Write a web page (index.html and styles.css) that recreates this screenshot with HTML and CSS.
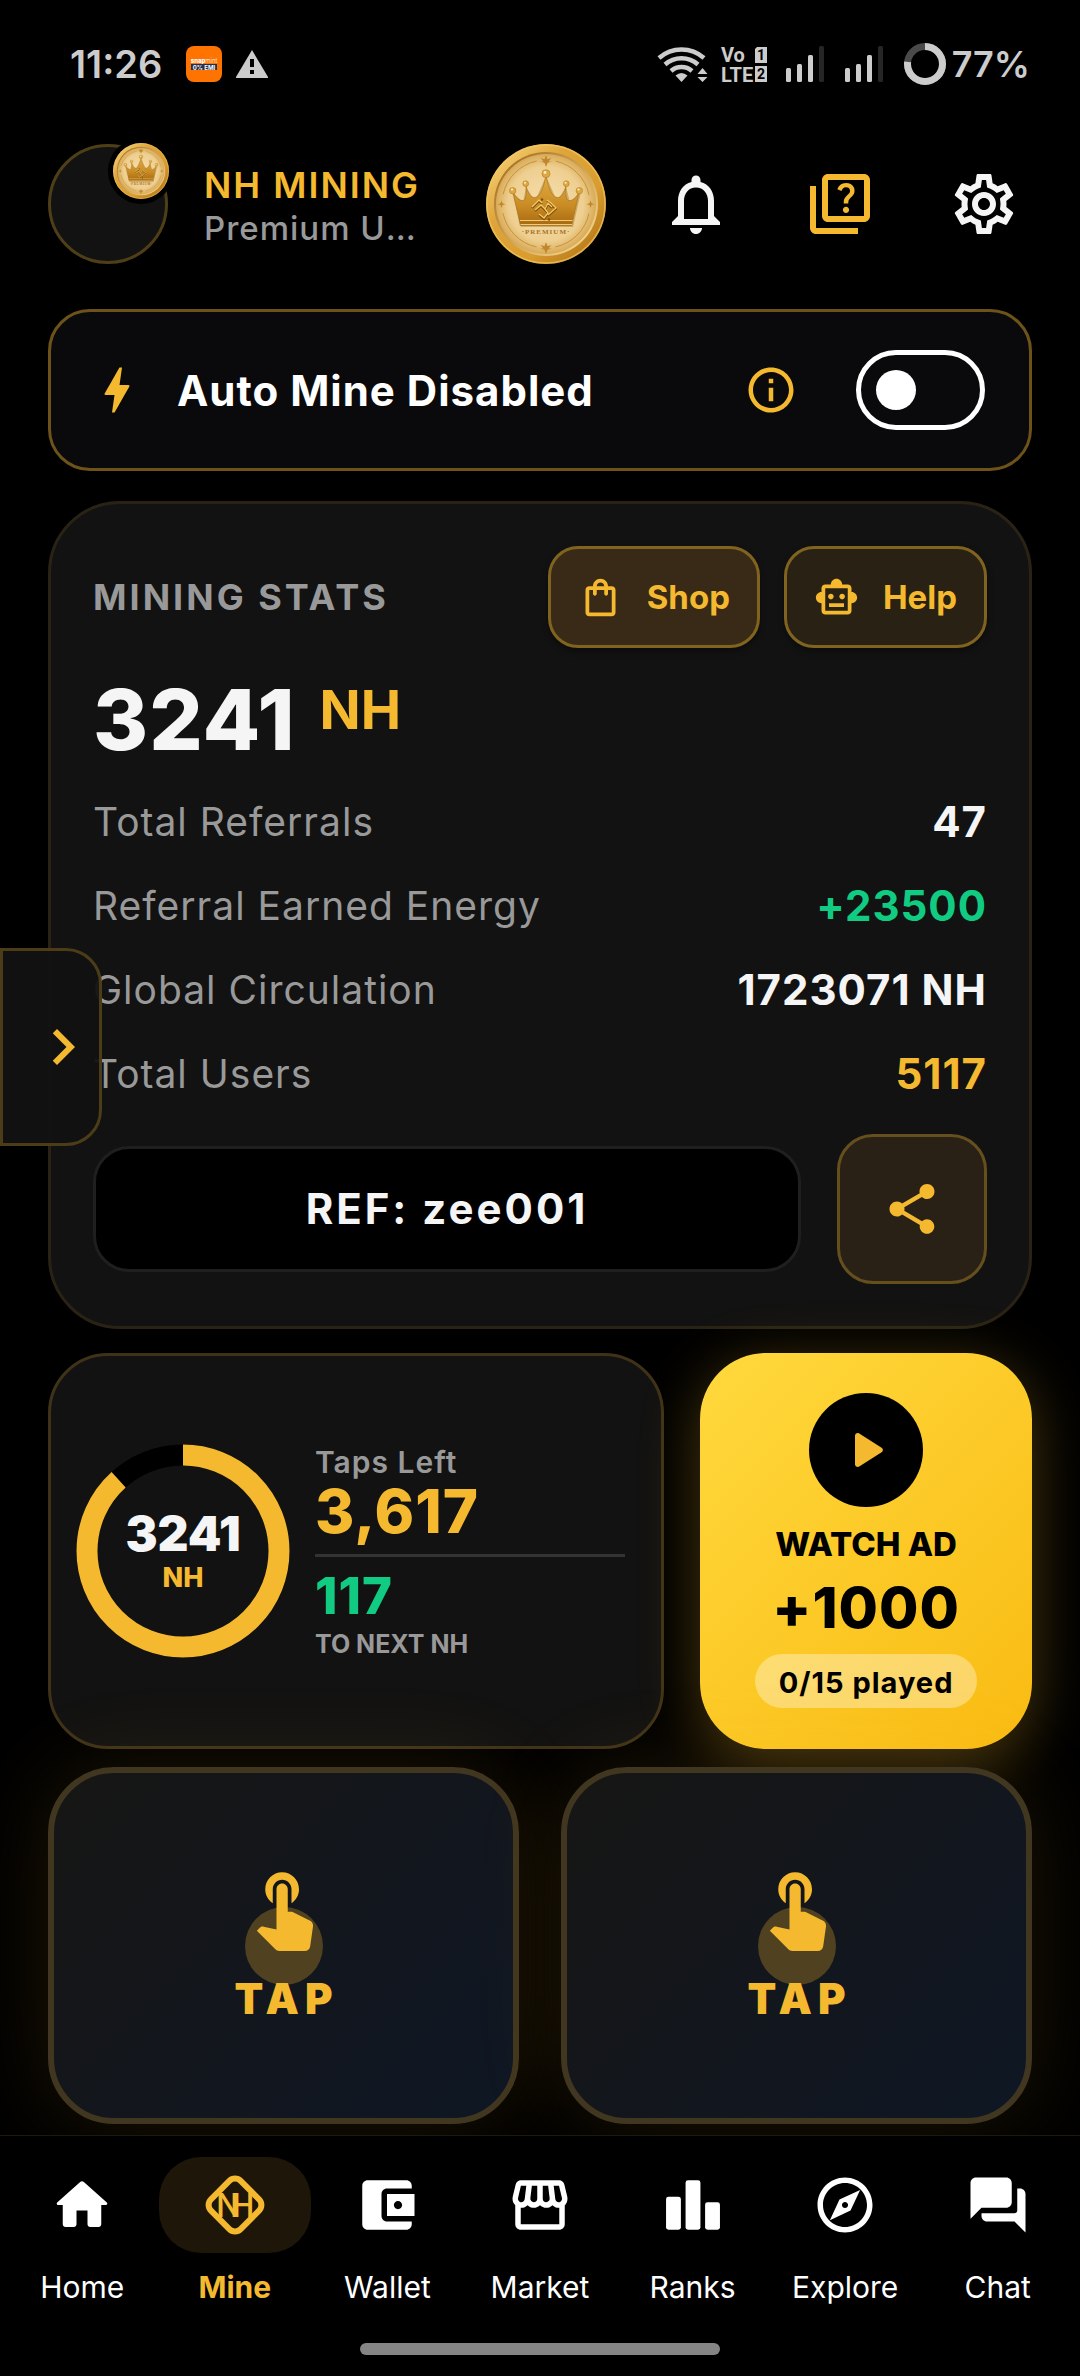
FILE: index.html
```html
<!DOCTYPE html>
<html lang="en">
<head>
    <meta charset="UTF-8">
    <meta name="viewport" content="width=device-width, initial-scale=1.0">
    <title>NH Mining</title>
    <link rel="stylesheet" href="styles.css">
</head>
<body>
    <!-- Shared symbols -->
    <svg class="defs" width="0" height="0" aria-hidden="true">
        <defs>
            <linearGradient id="coinRim" x1="0" y1="0" x2="1" y2="1">
                <stop offset="0" stop-color="#fbdc86"/>
                <stop offset="0.35" stop-color="#dfa53a"/>
                <stop offset="0.65" stop-color="#d99c2e"/>
                <stop offset="1" stop-color="#a86a12"/>
            </linearGradient>
            <linearGradient id="coinEdge" x1="1" y1="1" x2="0" y2="0">
                <stop offset="0" stop-color="#ffe39a"/>
                <stop offset="1" stop-color="#9c6315"/>
            </linearGradient>
            <radialGradient id="coinFace">
                <stop offset="0" stop-color="#f6dfae"/>
                <stop offset="0.75" stop-color="#eecf90"/>
                <stop offset="1" stop-color="#d9ab58"/>
            </radialGradient>
            <linearGradient id="crownFill" x1="0" y1="0" x2="0" y2="1">
                <stop offset="0" stop-color="#e3ac3e"/>
                <stop offset="0.6" stop-color="#c98c25"/>
                <stop offset="1" stop-color="#a8690f"/>
            </linearGradient>
        </defs>
        <symbol id="coin" viewBox="0 0 120 120">
            <circle cx="60" cy="60" r="60" fill="url(#coinRim)"/>
            <circle cx="60" cy="60" r="59" fill="none" stroke="#f2c763" stroke-width="1.5" opacity="0.7"/>
            <circle cx="60" cy="60" r="52" fill="url(#coinEdge)"/>
            <circle cx="60" cy="60" r="50" fill="url(#coinFace)"/>
            <circle cx="60" cy="60" r="44" fill="none" stroke="#c8923a" stroke-width="1" stroke-dasharray="50 19.1" stroke-dashoffset="-9.5"/>
            <g fill="#bf862b">
                <path d="M60 11l1.5 4.2 3.8-1.2-2.8 3.600H66l-4.500 1.200L60 23l-1.500-4.200L54 17.600h3.500l-2.800-3.600 3.800 1.200z"/>
                <path d="M60 98l1.500 4.200 3.800-1.200-2.800 3.600H66l-4.500 1.200L60 110l-1.500-4.200-4.500-1.200h3.500l-2.800-3.600 3.800 1.200z"/>
                <path d="M15.500 56.500l1 2.800 3 .9-3 .9-1 2.800-1-2.800-3-.9 3-.9z"/>
                <path d="M104.500 56.500l1 2.800 3 .9-3 .9-1 2.800-1-2.800-3-.9 3-.9z"/>
            </g>
            <path d="M35 83h52l8-35-11 10-4-15-9 14-11-25-11 25-9-14-3 15-11-10z" fill="#8f5b12" opacity="0.35"/>
            <path d="M34.300 81.500L27 48c3 6 6.500 9 10.500 8.500 3-1 3-9 2.500-15 1.500 7 4.500 12.500 9 12 5-1 8.500-9 11-22 2.500 13 6 21 11 22 4.500.5 7.500-5 9-12-.5 6-.5 14 2.500 15 4 .5 7.500-2.500 10.500-8.500l-7.300 33.500z" fill="url(#crownFill)" stroke="#a8701c" stroke-width="0.600"/>
            <path d="M34 76.500h52.500M34.500 80.500h51.500" stroke="#f7d683" stroke-width="0.900" fill="none"/>
            <g fill="#dfa941" stroke="#a8701c" stroke-width="0.500">
                <circle cx="26.700" cy="46.700" r="3.200"/>
                <circle cx="39.700" cy="39.700" r="2.900"/>
                <circle cx="60" cy="29.700" r="4"/>
                <circle cx="80.300" cy="39.700" r="2.900"/>
                <circle cx="93.300" cy="46.700" r="3.200"/>
            </g>
            <g fill="#fff0bf">
                <circle cx="26" cy="45.500" r="1.100"/>
                <circle cx="39" cy="38.700" r="1"/>
                <circle cx="59" cy="28.500" r="1.400"/>
                <circle cx="79.500" cy="38.700" r="1"/>
                <circle cx="92.500" cy="45.500" r="1.100"/>
            </g>
            <path d="M46 64l7-7 3 3M49 67l6-5 4 4 3-6 4 4M53 71l5 4 4-5-3-4M62 72l8-7-5-5-4-3M55 56l2-1M62 75l2 1" fill="none" stroke="#7d4d0d" stroke-width="2"/>
            <path d="M46 63l7-7 3 3M49 66l6-5 4 4 3-6 4 4M53 70l5 4 4-5-3-4M62 71l8-7-5-5-4-3" fill="none" stroke="#f3c964" stroke-width="1.300"/>
            <text x="60" y="90" class="coin-text">·PREMIUM·</text>
        </symbol>
        <symbol id="tapHand" viewBox="0 0 24 24">
            <path d="M9 11.240V7.500C9 6.120 10.120 5 11.500 5S14 6.120 14 7.500v3.740c1.210-.81 2-2.180 2-3.740C16 5.010 13.990 3 11.500 3S7 5.010 7 7.500c0 1.560.79 2.930 2 3.740zm9.840 4.630l-4.540-2.260c-.17-.07-.35-.11-.54-.11H13v-6c0-.83-.67-1.500-1.500-1.500S10 6.670 10 7.500v10.740l-3.430-.72c-.08-.01-.15-.03-.24-.03-.31 0-.59.13-.79.33l-.79.8 4.940 4.940c.27.27.65.44 1.060.44h6.790c.75 0 1.330-.55 1.440-1.280l.75-5.270c.01-.07.02-.14.02-.2 0-.62-.38-1.160-.91-1.380z"/>
        </symbol>
        <symbol id="signal" viewBox="0 0 38 36">
            <rect x="0" y="22" width="5" height="14" rx="1.500"/>
            <rect x="11" y="18" width="5" height="18" rx="1.500"/>
            <rect x="22" y="9" width="5" height="27" rx="1.500"/>
            <rect x="33" y="0" width="5" height="36" rx="1.500" fill="#262626"/>
        </symbol>
    </svg>

    <!-- Phone status bar -->
    <div class="status-bar">
        <div class="status-left">
            <span class="clock">11:26</span>
            <svg class="app-badge" viewBox="0 0 36 36">
                <rect width="36" height="36" rx="8" fill="#ff7300"/>
                <text x="18" y="17" class="app-name">snap<tspan class="thin">mint</tspan></text>
                <rect x="5" y="18" width="26" height="6" fill="#26304a"/>
                <text x="18" y="23.500" class="app-offer">0% EMI</text>
            </svg>
            <svg class="alert" viewBox="0 0 32 28">
                <path d="M16 0L32 27v1H0v-1zM14 9v8h4V9zM14 20v4h4v-4z" fill-rule="evenodd"/>
            </svg>
        </div>
        <div class="status-right">
            <svg class="wifi" viewBox="0 0 51 36">
                <g fill="none" stroke="#ccc" stroke-width="4.500">
                    <path d="M2 12a34 34 0 0 1 45 0"/>
                    <path d="M8 18.500a25 25 0 0 1 33 0"/>
                    <path d="M14 25a16 16 0 0 1 21 0"/>
                </g>
                <path d="M24.500 36l-6-6.500q6-5 12 0z"/>
                <path d="M45.500 22l5 6h-10zM45.500 36l5-5h-10z"/>
            </svg>
            <svg class="volte" viewBox="0 0 46 36">
                <text x="0" y="15.500">Vo</text>
                <text x="0" y="35.500">LTE</text>
                <path d="M36 1h10v16H34V3z"/>
                <path d="M34 20h12v16H34z"/>
                <text x="40" y="14" class="sim">1</text>
                <text x="40" y="33" class="sim">2</text>
            </svg>
            <svg class="bars"><use href="#signal"/></svg>
            <svg class="bars"><use href="#signal"/></svg>
            <div class="battery">
                <svg viewBox="0 0 42 42">
                    <circle cx="21" cy="21" r="17.500" fill="none" stroke="#4a4a4a" stroke-width="7"/>
                    <circle cx="21" cy="21" r="17.500" fill="none" stroke="#ccc" stroke-width="7" pathLength="100" stroke-dasharray="77 100" transform="rotate(-90 21 21)"/>
                </svg>
                <span>77%</span>
            </div>
        </div>
    </div>

    <header class="header">
        <div class="avatar">
            <svg class="avatar-badge"><use href="#coin"/></svg>
        </div>
        <div class="user">
            <div class="user-name">NH MINING</div>
            <div class="user-plan">Premium User</div>
        </div>
        <svg class="coin"><use href="#coin"/></svg>
        <div class="header-actions">
            <button type="button" class="icon-btn" aria-label="Notifications">
                <svg viewBox="0 0 24 24"><path d="M12 22c1.100 0 2-.9 2-2h-4c0 1.100.9 2 2 2zm6-6v-5c0-3.070-1.630-5.640-4.500-6.320V4c0-.83-.67-1.500-1.500-1.500s-1.500.67-1.500 1.500v.68C7.640 5.360 6 7.920 6 11v5l-2 2v1h16v-1l-2-2zm-2 1H8v-6c0-2.480 1.510-4.500 4-4.500s4 2.020 4 4.500v6z"/></svg>
            </button>
            <button type="button" class="icon-btn gold" aria-label="Quiz">
                <svg viewBox="0 0 24 24"><path d="M4 6H2v14c0 1.100.9 2 2 2h14v-2H4V6z"/><path d="M20 2H8c-1.100 0-2 .9-2 2v12c0 1.100.9 2 2 2h12c1.100 0 2-.9 2-2V4c0-1.100-.9-2-2-2zm0 14H8V4h12v12z"/><path d="M13.510 10.160c.41-.73 1.180-1.160 1.630-1.800.48-.68.21-1.940-1.140-1.940-.88 0-1.320.67-1.500 1.230l-1.370-.57C11.510 5.960 12.520 5 13.990 5c1.230 0 2.080.56 2.510 1.260.37.6.58 1.730.01 2.570-.63.93-1.230 1.210-1.560 1.810-.13.24-.18.4-.18 1.180h-1.520c.01-.41-.06-1.080.26-1.660zM12.950 13.950c0-.59.47-1.040 1.050-1.040.59 0 1.040.45 1.040 1.040 0 .58-.44 1.050-1.040 1.050-.58 0-1.050-.47-1.050-1.050z"/></svg>
            </button>
            <button type="button" class="icon-btn" aria-label="Settings">
                <svg viewBox="0 0 24 24"><path d="M19.430 12.980c.04-.32.07-.64.07-.98 0-.34-.03-.66-.07-.98l2.110-1.650c.19-.15.24-.42.12-.64l-2-3.460c-.09-.16-.26-.25-.44-.25-.06 0-.12.01-.17.03l-2.490 1c-.52-.4-1.080-.73-1.690-.98l-.38-2.650C14.460 2.180 14.250 2 14 2h-4c-.25 0-.46.18-.49.42l-.38 2.650c-.61.25-1.170.59-1.690.98l-2.490-1c-.06-.02-.12-.03-.18-.03-.17 0-.34.09-.43.25l-2 3.460c-.13.22-.07.49.12.64l2.110 1.650c-.04.32-.07.65-.07.98 0 .33.03.66.07.98l-2.110 1.650c-.19.15-.24.42-.12.64l2 3.460c.09.16.26.25.44.25.06 0 .12-.01.17-.03l2.490-1c.52.4 1.080.73 1.690.98l.38 2.650c.03.24.24.42.49.42h4c.25 0 .46-.18.49-.42l.38-2.650c.61-.25 1.170-.59 1.690-.98l2.490 1c.06.02.12.03.18.03.17 0 .34-.09.43-.25l2-3.460c.12-.22.07-.49-.12-.64l-2.110-1.650zm-1.980-1.710c.04.31.05.52.05.73 0 .21-.02.43-.05.73l-.14 1.130.89.7 1.080.84-.7 1.210-1.270-.51-1.040-.42-.9.68c-.43.32-.84.56-1.250.73l-1.060.43-.16 1.130-.2 1.350h-1.400l-.19-1.350-.16-1.130-1.060-.43c-.43-.18-.83-.41-1.230-.71l-.91-.7-1.060.43-1.270.51-.7-1.210 1.080-.84.89-.7-.14-1.130c-.03-.31-.05-.54-.05-.74s.02-.43.05-.73l.14-1.130-.89-.7-1.080-.84.7-1.210 1.270.51 1.040.42.9-.68c.43-.32.84-.56 1.250-.73l1.060-.43.16-1.130.2-1.350h1.390l.19 1.350.16 1.130 1.060.43c.43.18.83.41 1.230.71l.91.7 1.060-.43 1.270-.51.7 1.210-1.070.85-.89.7.14 1.130zM12 8c-2.210 0-4 1.790-4 4s1.790 4 4 4 4-1.790 4-4-1.790-4-4-4zm0 6c-1.100 0-2-.9-2-2s.9-2 2-2 2 .9 2 2-.9 2-2 2z"/></svg>
            </button>
        </div>
    </header>

    <main class="content">
        <!-- Auto mine switch -->
        <section class="auto-mine">
            <svg class="bolt" viewBox="0 0 24 24"><path d="M11 21h-1l1-7H7.500c-.58 0-.57-.32-.38-.66.19-.34.05-.08.07-.12C8.480 10.940 10.420 7.540 13 3h1l-1 7h3.500c.49 0 .56.33.47.51l-.07.15C12.960 17.550 11 21 11 21z"/></svg>
            <label for="autoMine" class="auto-label">Auto Mine Disabled</label>
            <button type="button" class="info-btn" aria-label="About auto mine">
                <svg viewBox="0 0 24 24"><path d="M11 7h2v2h-2zm0 4h2v6h-2zm1-9C6.480 2 2 6.480 2 12s4.480 10 10 10 10-4.480 10-10S17.520 2 12 2zm0 18c-4.410 0-8-3.590-8-8s3.590-8 8-8 8 3.590 8 8-3.590 8-8 8z"/></svg>
            </button>
            <input type="checkbox" id="autoMine" class="switch">
        </section>

        <!-- Mining stats -->
        <section class="stats">
            <div class="stats-head">
                <h2 class="stats-title">MINING STATS</h2>
                <div class="stats-actions">
                    <button type="button" class="chip-btn shop">
                        <svg viewBox="0 0 24 24"><path d="M18 6h-2c0-2.210-1.790-4-4-4S8 3.790 8 6H6c-1.100 0-2 .9-2 2v12c0 1.100.9 2 2 2h12c1.100 0 2-.9 2-2V8c0-1.100-.9-2-2-2zm-6-2c1.100 0 2 .9 2 2h-4c0-1.100.9-2 2-2zm6 16H6V8h2v2c0 .55.45 1 1 1s1-.45 1-1V8h4v2c0 .55.45 1 1 1s1-.45 1-1V8h2v12z"/></svg>
                        Shop
                    </button>
                    <button type="button" class="chip-btn">
                        <svg viewBox="0 0 24 24"><path d="M20 9V7c0-1.100-.9-2-2-2h-3c0-1.660-1.340-3-3-3S9 3.340 9 5H6c-1.100 0-2 .9-2 2v2c-1.660 0-3 1.340-3 3s1.340 3 3 3v4c0 1.100.9 2 2 2h12c1.100 0 2-.9 2-2v-4c1.660 0 3-1.340 3-3s-1.340-3-3-3zm-2 10H6V7h12v12zm-9-6c-.83 0-1.500-.67-1.500-1.500S8.170 10 9 10s1.500.67 1.500 1.500S9.830 13 9 13zm7.500-1.500c0 .83-.67 1.500-1.500 1.500s-1.500-.67-1.500-1.500.67-1.500 1.500-1.500 1.500.67 1.500 1.500zM8 15h8v2H8v-2z"/></svg>
                        Help
                    </button>
                </div>
            </div>
            <div class="balance">
                <span class="balance-value">3241</span>
                <span class="balance-unit">NH</span>
            </div>
            <dl class="stat-list">
                <div class="stat-row"><dt>Total Referrals</dt><dd>47</dd></div>
                <div class="stat-row"><dt>Referral Earned Energy</dt><dd class="green">+23500</dd></div>
                <div class="stat-row"><dt>Global Circulation</dt><dd>1723071 NH</dd></div>
                <div class="stat-row"><dt>Total Users</dt><dd class="gold">5117</dd></div>
            </dl>
            <div class="ref-row">
                <div class="ref-code">REF: zee001</div>
                <button type="button" class="share-btn" aria-label="Share">
                    <svg viewBox="0 0 24 24"><path d="M18 16.080c-.76 0-1.440.3-1.960.77L8.910 12.700c.05-.23.09-.46.09-.7s-.04-.47-.09-.7l7.050-4.110c.54.5 1.250.81 2.040.81 1.660 0 3-1.340 3-3s-1.340-3-3-3-3 1.340-3 3c0 .24.04.47.09.7L8.040 9.810C7.500 9.310 6.790 9 6 9c-1.660 0-3 1.340-3 3s1.340 3 3 3c.79 0 1.500-.31 2.040-.81l7.120 4.160c-.05.21-.08.43-.08.65 0 1.610 1.310 2.920 2.920 2.920s2.920-1.310 2.920-2.920-1.310-2.920-2.920-2.920z"/></svg>
                </button>
            </div>
        </section>

        <!-- Progress and ad reward -->
        <div class="cards">
            <section class="progress">
                <div class="ring">
                    <svg viewBox="0 0 214 214">
                        <circle cx="107" cy="107" r="96" fill="none" stroke="#000" stroke-width="21"/>
                        <circle cx="107" cy="107" r="96" fill="none" stroke="#f4b92f" stroke-width="21" pathLength="1000" stroke-dasharray="883 1000" transform="rotate(-90 107 107)"/>
                    </svg>
                    <div class="ring-text">
                        <span class="ring-value">3241</span>
                        <span class="ring-unit">NH</span>
                    </div>
                </div>
                <div class="taps">
                    <div class="taps-label">Taps Left</div>
                    <div class="taps-value">3,617</div>
                    <div class="next-value">117</div>
                    <div class="next-label">TO NEXT NH</div>
                </div>
            </section>
            <button type="button" class="watch-ad">
                <span class="play">
                    <svg viewBox="0 0 24 24"><path d="M8 6.820v10.360c0 .79.870 1.270 1.540.84l8.140-5.180c.62-.39.62-1.290 0-1.690L9.540 5.980C8.870 5.550 8 6.030 8 6.820z"/></svg>
                </span>
                <span class="watch-title">WATCH AD</span>
                <span class="watch-reward">+1000</span>
                <span class="watch-count">0/15 played</span>
            </button>
        </div>

        <!-- Tap pads -->
        <div class="pads">
            <button type="button" class="pad">
                <svg><use href="#tapHand"/></svg>
                <span>TAP</span>
            </button>
            <button type="button" class="pad">
                <svg><use href="#tapHand"/></svg>
                <span>TAP</span>
            </button>
        </div>
    </main>

    <button type="button" class="side-tab" aria-label="Open side panel">
        <svg viewBox="0 0 24 24"><path d="M10 6L8.590 7.410 13.170 12l-4.580 4.590L10 18l6-6z"/></svg>
    </button>

    <nav class="bottom-nav">
        <div class="nav-items">
            <a href="#home" class="nav-item">
                <span class="nav-icon"><svg viewBox="0 0 24 24"><path d="M10 19v-5h4v5c0 .55.45 1 1 1h3c.55 0 1-.45 1-1v-7h1.700c.46 0 .68-.57.33-.87L12.670 3.600c-.38-.34-.96-.34-1.340 0l-8.360 7.530c-.34.3-.13.87.33.87H5v7c0 .55.45 1 1 1h3c.55 0 1-.45 1-1z"/></svg></span>
                <span>Home</span>
            </a>
            <a href="#mine" class="nav-item active">
                <span class="nav-icon">
                    <svg viewBox="0 0 66 66">
                        <rect x="12" y="12" width="42" height="42" rx="8" fill="none" stroke="#f4b92f" stroke-width="6" transform="rotate(45 33 33)"/>
                        <text x="14 28" y="45" class="nh-mark">NH</text>
                    </svg>
                </span>
                <span>Mine</span>
            </a>
            <a href="#wallet" class="nav-item">
                <span class="nav-icon"><svg viewBox="0 0 24 24"><path d="M21 18v1c0 1.100-.9 2-2 2H5c-1.110 0-2-.9-2-2V5c0-1.100.89-2 2-2h14c1.100 0 2 .9 2 2v1h-9c-1.110 0-2 .9-2 2v8c0 1.100.89 2 2 2h9zm-9-2h10V8H12v8zm4-2.500c-.83 0-1.500-.67-1.500-1.500s.67-1.500 1.500-1.500 1.500.67 1.500 1.500-.67 1.500-1.500 1.500z"/></svg></span>
                <span>Wallet</span>
            </a>
            <a href="#market" class="nav-item">
                <span class="nav-icon"><svg viewBox="0 0 24 24"><path d="M21.900 8.890l-1.050-4.370c-.22-.9-1-1.520-1.910-1.520H5.050c-.9 0-1.690.63-1.900 1.520L2.100 8.890c-.24 1.020-.02 2.060.62 2.880.08.11.19.19.28.29V19c0 1.100.9 2 2 2h14c1.100 0 2-.9 2-2v-6.940c.09-.09.2-.18.28-.28.64-.82.87-1.870.62-2.890zm-2.990-3.900l1.050 4.370c.1.42.01.84-.25 1.170-.14.18-.44.47-.94.47-.61 0-1.140-.49-1.210-1.140L16.980 5l1.930-.01zM13 5h1.960l.54 4.520c.05.39-.07.78-.33 1.070-.22.26-.54.41-.95.41-.67 0-1.220-.59-1.220-1.310V5zM8.490 9.520L9.040 5H11v4.690c0 .72-.55 1.310-1.290 1.310-.34 0-.65-.15-.89-.41-.25-.29-.37-.68-.33-1.070zm-4.450-.16L5.050 5h1.970l-.58 4.860c-.08.65-.6 1.140-1.210 1.140-.49 0-.8-.29-.93-.47-.27-.32-.36-.75-.26-1.170zM5 19v-6.030c.08.01.15.03.23.03.87 0 1.660-.36 2.240-.95.6.6 1.400.95 2.310.95.87 0 1.650-.36 2.230-.93.59.57 1.390.93 2.290.93.84 0 1.640-.35 2.240-.95.58.59 1.370.95 2.240.95.08 0 .15-.02.23-.03V19H5z"/></svg></span>
                <span>Market</span>
            </a>
            <a href="#ranks" class="nav-item">
                <span class="nav-icon"><svg viewBox="0 0 24 24"><rect x="2.200" y="9" width="5.400" height="12" rx="0.900"/><rect x="9.300" y="3" width="5.400" height="18" rx="0.900"/><rect x="16.400" y="11" width="5.400" height="10" rx="0.900"/></svg></span>
                <span>Ranks</span>
            </a>
            <a href="#explore" class="nav-item">
                <span class="nav-icon"><svg viewBox="0 0 24 24"><path d="M12 2C6.480 2 2 6.480 2 12s4.480 10 10 10 10-4.480 10-10S17.520 2 12 2zm0 18c-4.410 0-8-3.590-8-8s3.590-8 8-8 8 3.590 8 8-3.590 8-8 8z"/><path d="M6.500 17.500l7.510-3.490L17.500 6.500 9.990 9.990 6.500 17.500zm5.500-6.600c.61 0 1.100.49 1.100 1.100s-.49 1.100-1.100 1.100-1.100-.49-1.100-1.100.49-1.100 1.100-1.100z" fill-rule="evenodd"/></svg></span>
                <span>Explore</span>
            </a>
            <a href="#chat" class="nav-item">
                <span class="nav-icon"><svg viewBox="0 0 24 24"><path d="M20 6h-1v8c0 .55-.45 1-1 1H6v1c0 1.100.9 2 2 2h10l4 4V8c0-1.100-.9-2-2-2zm-3 5V4c0-1.100-.9-2-2-2H4c-1.100 0-2 .9-2 2v13l4-4h9c1.100 0 2-.9 2-2z"/></svg></span>
                <span>Chat</span>
            </a>
        </div>
        <div class="home-bar"></div>
    </nav>
</body>
</html>
```

FILE: styles.css
```css
* {
    box-sizing: border-box;
}
body {
    margin: 0;
    min-height: 100vh;
    display: flex;
    flex-direction: column;
    position: relative;
    background: #000;
    color: #f5f5f5;
    font-family: Inter, Roboto, sans-serif;
}
svg {
    display: block;
    overflow: visible;
    fill: currentColor;
}
button {
    margin: 0;
    padding: 0;
    border: 0;
    background: none;
    color: inherit;
    font-family: inherit;
    cursor: pointer;
}
.defs {
    position: absolute;
}
.gold {
    color: #f4b92f;
}
.green {
    color: #10cb81;
}

/* Status bar */
.status-bar {
    height: 128px;
    padding: 0 50px 0 70px;
    display: flex;
    justify-content: space-between;
    align-items: center;
    color: #ccc;
}
.status-left,
.status-right,
.battery {
    display: flex;
    align-items: center;
}
.clock {
    font-size: 38px;
    font-weight: 600;
    margin-right: 24px;
}
.app-badge {
    width: 36px;
    height: 36px;
    margin-right: 14px;
}
.app-name {
    font-size: 6px;
    font-weight: 800;
    fill: #fff;
    text-anchor: middle;
}
.app-name .thin {
    font-weight: 300;
}
.app-offer {
    font-size: 6px;
    font-weight: 700;
    fill: #fff;
    text-anchor: middle;
}
.alert {
    width: 32px;
    height: 28px;
}
.wifi {
    width: 51px;
    height: 36px;
    margin-right: 13px;
}
.volte {
    width: 46px;
    height: 36px;
    margin-right: 19px;
    font-family: Roboto, sans-serif;
    font-size: 20px;
    font-weight: 700;
}
.volte .sim {
    font-size: 14px;
    fill: #000;
    text-anchor: middle;
}
.bars {
    width: 38px;
    height: 36px;
    margin-right: 21px;
}
.battery {
    gap: 6px;
    font-size: 36px;
    font-weight: 600;
}
.battery svg {
    width: 42px;
    height: 42px;
}

/* Header */
.header {
    padding: 16px 24px 45px 48px;
    display: flex;
    align-items: center;
}
.avatar {
    position: relative;
    flex: none;
    width: 120px;
    height: 120px;
    border: 3px solid #4f3f18;
    border-radius: 50%;
    background: #121212;
}
.avatar-badge {
    position: absolute;
    top: -9px;
    right: -9px;
    width: 66px;
    height: 66px;
    border: 5px solid #000;
    border-radius: 50%;
    background: #000;
}
.coin-text {
    font-family: "Liberation Serif", serif;
    font-size: 7px;
    font-weight: 700;
    letter-spacing: 1px;
    fill: #a8732a;
    text-anchor: middle;
}
.user {
    flex: 1;
    min-width: 0;
    margin-left: 36px;
    padding-top: 6px;
    line-height: 43px;
    white-space: nowrap;
}
.user-name {
    font-size: 36px;
    font-weight: 600;
    letter-spacing: 2px;
    color: #f4b92f;
}
.user-plan {
    overflow: hidden;
    text-overflow: ellipsis;
    font-size: 33px;
    font-weight: 500;
    letter-spacing: 1px;
    color: #999;
}
.coin {
    flex: none;
    width: 120px;
    height: 120px;
    margin: 0 18px 0 66px;
}
.header-actions {
    display: flex;
}
.icon-btn {
    width: 144px;
    height: 96px;
    display: grid;
    place-items: center;
}
.icon-btn svg {
    width: 72px;
    height: 72px;
}

/* Main column */
.content {
    padding: 0 48px 11px;
}
.auto-mine {
    min-height: 162px;
    padding: 0 44px 0 36px;
    display: flex;
    align-items: center;
    border: 3px solid #6d5319;
    border-radius: 42px;
    background: #0a0a0c;
}
.bolt {
    width: 60px;
    height: 60px;
    color: #f4b92f;
}
.auto-label {
    flex: 1;
    margin-left: 30px;
    font-size: 42px;
    font-weight: 700;
    letter-spacing: 1px;
    color: #fff;
}
.info-btn {
    margin-right: 58px;
    color: #f4b92f;
}
.info-btn svg {
    width: 54px;
    height: 54px;
}
.switch {
    appearance: none;
    margin: 0;
    width: 129px;
    height: 80px;
    padding: 15px;
    display: flex;
    border: 5px solid #fff;
    border-radius: 40px;
    cursor: pointer;
}
.switch::before {
    content: "";
    width: 40px;
    height: 40px;
    border-radius: 50%;
    background: #fff;
}
.switch:checked {
    justify-content: flex-end;
}

/* Stats card */
.stats {
    margin-top: 30px;
    padding: 42px;
    border: 3px solid #2a2315;
    border-radius: 72px;
    background: #121212;
}
.stats-head {
    display: flex;
    justify-content: space-between;
    align-items: center;
}
.stats-title {
    margin: 0;
    font-size: 36px;
    font-weight: 700;
    letter-spacing: 3px;
    color: #999;
}
.stats-actions {
    display: flex;
    gap: 24px;
}
.chip-btn {
    height: 102px;
    padding: 0 27px;
    display: flex;
    align-items: center;
    gap: 24px;
    border: 3px solid #80631f;
    border-radius: 30px;
    background: #292113;
    box-shadow: 0 3px 6px rgba(0, 0, 0, 0.4);
    color: #f4b92f;
    font-size: 33px;
    font-weight: 700;
}
.chip-btn.shop {
    background: #382a16;
}
.chip-btn svg {
    width: 45px;
    height: 45px;
}
.balance {
    margin-top: 21px;
    display: flex;
    gap: 24px;
    line-height: 102px;
}
.balance-value {
    font-size: 84px;
    font-weight: 800;
    letter-spacing: 1px;
}
.balance-unit {
    font-size: 54px;
    font-weight: 700;
    line-height: 82px;
    color: #f4b92f;
}
.stat-list {
    margin: 27px 0 36px;
    display: flex;
    flex-direction: column;
    gap: 36px;
}
.stat-row {
    display: flex;
    justify-content: space-between;
    line-height: 48px;
}
.stat-row dt {
    font-size: 39px;
    letter-spacing: 1px;
    color: #999;
}
.stat-row dd {
    margin: 0;
    font-size: 42px;
    font-weight: 700;
    letter-spacing: 1px;
}
.ref-row {
    display: flex;
    align-items: center;
    gap: 36px;
}
.ref-code {
    flex: 1;
    padding: 35px 0;
    border: 3px solid #1f1f1f;
    border-radius: 36px;
    background: #000;
    font-size: 42px;
    font-weight: 700;
    line-height: 50px;
    letter-spacing: 3px;
    text-align: center;
}
.share-btn {
    width: 150px;
    height: 150px;
    display: grid;
    place-items: center;
    border: 3px solid #65501d;
    border-radius: 36px;
    background: #292115;
    color: #f4b92f;
}
.share-btn svg {
    width: 60px;
    height: 60px;
}

/* Progress and ad cards */
.cards {
    margin-top: 24px;
    display: grid;
    grid-template-columns: 13fr 7fr;
    gap: 36px;
}
.progress {
    padding: 0 36px 0 25px;
    display: flex;
    align-items: center;
    gap: 25px;
    border: 3px solid #3f3218;
    border-radius: 60px;
    background: #121212;
}
.ring {
    flex: none;
    width: 214px;
    display: grid;
    place-items: center;
}
.ring svg,
.ring-text {
    grid-area: 1 / 1;
}
.ring svg {
    width: 100%;
}
.ring-text {
    padding-top: 3px;
    display: flex;
    flex-direction: column;
    align-items: center;
}
.ring-value {
    font-size: 48px;
    font-weight: 900;
    line-height: 50px;
}
.ring-unit {
    font-size: 27px;
    font-weight: 800;
    line-height: 38px;
    color: #f4b92f;
}
.taps {
    flex: 1;
    padding-top: 4px;
}
.taps-label {
    font-size: 30px;
    font-weight: 600;
    line-height: 36px;
    letter-spacing: 1px;
    color: #999;
}
.taps-value {
    padding-bottom: 12px;
    border-bottom: 3px solid #333;
    font-size: 60px;
    font-weight: 800;
    line-height: 62px;
    letter-spacing: 1px;
    color: #f4b92f;
}
.next-value {
    margin-top: 9px;
    font-size: 51px;
    font-weight: 800;
    line-height: 60px;
    letter-spacing: 1px;
    color: #10cb81;
}
.next-label {
    font-size: 25px;
    font-weight: 700;
    line-height: 36px;
    color: #999;
}
.watch-ad {
    padding: 40px 0 41px;
    display: flex;
    flex-direction: column;
    align-items: center;
    border-radius: 66px;
    background: linear-gradient(135deg, #ffd93d, #f9bb12);
    box-shadow: 0 12px 60px rgba(244, 185, 47, 0.3);
    color: #000;
}
.play {
    width: 114px;
    height: 114px;
    display: grid;
    place-items: center;
    border-radius: 50%;
    background: #000;
    color: #f4b92f;
}
.play svg {
    width: 66px;
    height: 66px;
}
.watch-title {
    margin-top: 17px;
    font-size: 33px;
    font-weight: 800;
    line-height: 40px;
}
.watch-reward {
    margin: 11px 0 13px;
    font-size: 57px;
    font-weight: 800;
    line-height: 66px;
    letter-spacing: 1px;
}
.watch-count {
    padding: 4px 24px 0;
    border-radius: 27px;
    background: rgba(255, 255, 255, 0.35);
    font-size: 29px;
    font-weight: 700;
    line-height: 50px;
    letter-spacing: 1px;
}

/* Tap pads */
.pads {
    margin-top: 18px;
    display: grid;
    grid-template-columns: 1fr 1fr;
    gap: 42px;
}
.pad {
    position: relative;
    min-height: 357px;
    padding-bottom: 10px;
    display: flex;
    flex-direction: column;
    align-items: center;
    justify-content: center;
    gap: 27px;
    border: 6px solid #41361f;
    border-radius: 66px;
    background: linear-gradient(135deg, #161614, #12161e 60%, #0e1724);
    box-shadow: 0 0 90px rgba(244, 185, 47, 0.12);
    color: #f4b92f;
}
.pad::before {
    content: "";
    position: absolute;
    top: 50%;
    left: 50%;
    width: 78px;
    height: 78px;
    margin: -39px 0 0 -39px;
    border-radius: 50%;
    background: #504221;
}
.pad svg,
.pad span {
    position: relative;
}
.pad svg {
    width: 90px;
    height: 90px;
}
.pad span {
    padding-left: 6px;
    font-size: 42px;
    font-weight: 900;
    line-height: 42px;
    letter-spacing: 6px;
}

/* Side drawer handle, lies over the stats card */
.side-tab {
    position: absolute;
    top: 948px;
    left: 0;
    width: 102px;
    height: 198px;
    display: flex;
    align-items: center;
    justify-content: flex-end;
    border: 3px solid #4c3c18;
    border-radius: 0 36px 36px 0;
    background: rgba(18, 18, 18, 0.95);
    color: #f4b92f;
}
.side-tab svg {
    width: 72px;
    height: 72px;
}

/* Bottom navigation */
.bottom-nav {
    position: relative;
    margin-top: auto;
    padding: 21px 6px;
    border-top: 1px solid #1f190c;
    background: #000;
}
.nav-items {
    display: grid;
    grid-template-columns: repeat(7, 1fr);
}
.nav-item {
    display: flex;
    flex-direction: column;
    gap: 16px;
    color: #fff;
    font-size: 30px;
    line-height: 36px;
    text-align: center;
    text-decoration: none;
}
.nav-icon {
    height: 96px;
    display: grid;
    place-items: center;
    border-radius: 42px;
}
.nav-icon svg {
    width: 66px;
    height: 66px;
}
.nav-item.active {
    color: #f4b92f;
    font-weight: 700;
}
.active .nav-icon {
    background: #1e1608;
}
.nh-mark {
    font-size: 33px;
    font-weight: 500;
}
.home-bar {
    width: 360px;
    height: 12px;
    margin: 38px auto 0;
    border-radius: 6px;
    background: #858585;
}
```
